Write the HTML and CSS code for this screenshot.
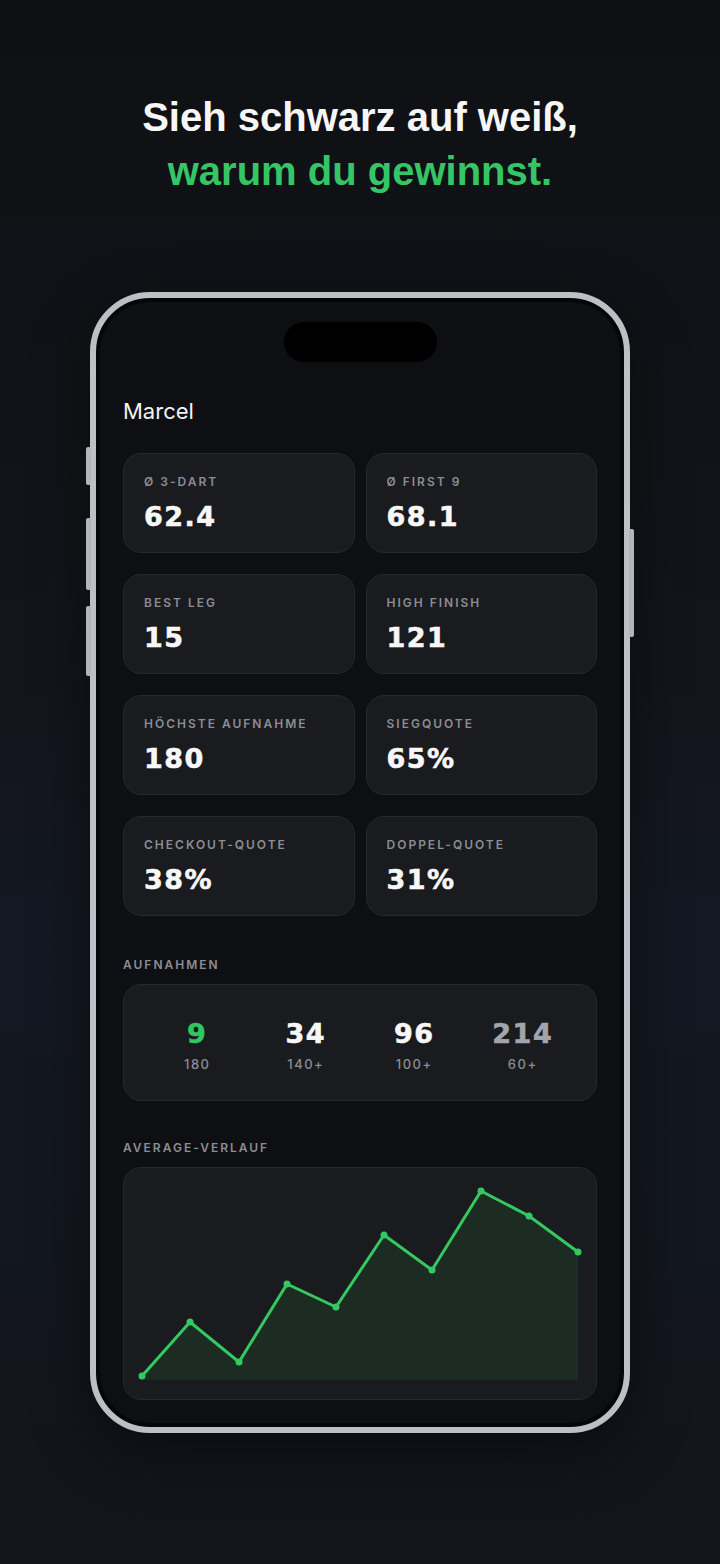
FILE: index.html
```html
<!DOCTYPE html>
<html lang="de">
<head>
    <meta charset="UTF-8">
    <meta name="viewport" content="width=device-width, initial-scale=1.0">
    <title>Statistiken</title>
    <link rel="stylesheet" href="styles.css">
</head>
<body>
<header class="hero">
    <h1>Sieh schwarz auf weiß,<br><span class="accent">warum du gewinnst.</span></h1>
</header>

<div class="phone">
    <span class="side-btn btn-action"></span>
    <span class="side-btn btn-vol-up"></span>
    <span class="side-btn btn-vol-down"></span>
    <span class="side-btn btn-power"></span>

    <div class="screen">
        <div class="island"></div>

        <div class="player-name">Marcel</div>

        <div class="stats-grid">
            <div class="stat-card">
                <div class="label">Ø 3-Dart</div>
                <div class="value">62.4</div>
            </div>
            <div class="stat-card">
                <div class="label">Ø First 9</div>
                <div class="value">68.1</div>
            </div>
            <div class="stat-card">
                <div class="label">Best Leg</div>
                <div class="value">15</div>
            </div>
            <div class="stat-card">
                <div class="label">High Finish</div>
                <div class="value">121</div>
            </div>
            <div class="stat-card">
                <div class="label">Höchste Aufnahme</div>
                <div class="value">180</div>
            </div>
            <div class="stat-card">
                <div class="label">Siegquote</div>
                <div class="value">65%</div>
            </div>
            <div class="stat-card">
                <div class="label">Checkout-Quote</div>
                <div class="value">38%</div>
            </div>
            <div class="stat-card">
                <div class="label">Doppel-Quote</div>
                <div class="value">31%</div>
            </div>
        </div>

        <div class="section-title">Aufnahmen</div>
        <div class="scores-card">
            <div class="score">
                <div class="value green">9</div>
                <div class="sub">180</div>
            </div>
            <div class="score">
                <div class="value">34</div>
                <div class="sub">140+</div>
            </div>
            <div class="score">
                <div class="value">96</div>
                <div class="sub">100+</div>
            </div>
            <div class="score">
                <div class="value muted">214</div>
                <div class="sub">60+</div>
            </div>
        </div>

        <div class="section-title chart-title">Average-Verlauf</div>
        <div class="chart-card">
            <!-- Verlauf der letzten 10 Spiele -->
            <svg viewBox="0 0 472 231" width="472" height="231">
                <polygon class="chart-area"
                         points="18,212 18,208 66,154 115,194 163,116 212,139 260,67 308,102 357,23 405,48 454,84 454,212"/>
                <polyline class="chart-line"
                          points="18,208 66,154 115,194 163,116 212,139 260,67 308,102 357,23 405,48 454,84"/>
                <g class="chart-dots">
                    <circle cx="18" cy="208" r="3.5"/>
                    <circle cx="66" cy="154" r="3.5"/>
                    <circle cx="115" cy="194" r="3.5"/>
                    <circle cx="163" cy="116" r="3.5"/>
                    <circle cx="212" cy="139" r="3.5"/>
                    <circle cx="260" cy="67" r="3.5"/>
                    <circle cx="308" cy="102" r="3.5"/>
                    <circle cx="357" cy="23" r="3.5"/>
                    <circle cx="405" cy="48" r="3.5"/>
                    <circle cx="454" cy="84" r="3.5"/>
                </g>
            </svg>
        </div>
    </div>
</div>
</body>
</html>
```

FILE: styles.css
```css
* {
    box-sizing: border-box;
}
html, body {
    margin: 0;
    padding: 0;
}
body {
    width: 720px;
    min-height: 1564px;
    font-family: Inter, "Noto Sans", sans-serif;
    background: linear-gradient(180deg, #0f1014 0%, #121419 35%, #141822 60%, #12151b 100%);
    color: #fff;
}

.hero {
    padding-top: 90px;
    text-align: center;
}
.hero h1 {
    margin: 0;
    font-family: "Liberation Sans", Arial, sans-serif;
    font-size: 40px;
    font-weight: 700;
    line-height: 54px;
    color: #f6f6f6;
}
.hero .accent {
    color: #36c566;
}

/* Telefonrahmen */
.phone {
    position: relative;
    width: 540px;
    height: 1141px;
    margin: 94px auto 0;
    padding: 4px;
    border: 6px solid #bdbfc4;
    border-radius: 60px;
    background: #050608;
    box-shadow: 0 20px 60px rgba(0, 0, 0, 0.45);
}
.side-btn {
    position: absolute;
    width: 5px;
    background: #b3b5ba;
    border-radius: 2px;
}
.btn-action {
    left: -10px;
    top: 149px;
    height: 38px;
}
.btn-vol-up {
    left: -10px;
    top: 220px;
    height: 72px;
}
.btn-vol-down {
    left: -10px;
    top: 308px;
    height: 70px;
}
.btn-power {
    right: -10px;
    top: 231px;
    height: 108px;
}

.screen {
    height: 100%;
    padding: 0 23px;
    border-radius: 50px;
    background: #0e0f13;
    overflow: hidden;
}
.island {
    width: 153px;
    height: 40px;
    margin: 20px auto 0;
    border-radius: 20px;
    background: #000;
}
.player-name {
    margin-top: 35px;
    font-size: 22px;
    line-height: 28px;
    font-weight: 400;
    color: #f2f2f2;
}

.stats-grid {
    display: grid;
    grid-template-columns: 1fr 1fr;
    column-gap: 11px;
    row-gap: 21px;
    margin-top: 28px;
}
.stat-card {
    height: 100px;
    padding: 21px 20px 0;
    background: #1a1b1e;
    border: 1px solid #27282c;
    border-radius: 18px;
}
.label, .section-title {
    font-size: 12px;
    line-height: 14px;
    font-weight: 600;
    letter-spacing: 2px;
    text-transform: uppercase;
    color: #8b8d93;
}
.value {
    margin-top: 11px;
    font-family: "DejaVu Sans", sans-serif;
    font-size: 27px;
    line-height: 34px;
    font-weight: 700;
    letter-spacing: 1.5px;
    color: #f7f7f7;
    -webkit-text-stroke: 0.6px currentColor;
}

.section-title {
    margin-top: 42px;
}
.scores-card {
    display: grid;
    grid-template-columns: repeat(4, 1fr);
    height: 117px;
    margin-top: 12px;
    padding: 32px 19px 0;
    background: #1a1b1e;
    border: 1px solid #27282c;
    border-radius: 18px;
}
.score {
    text-align: center;
}
.score .value {
    margin-top: 0;
}
.score .green {
    color: #33c561;
}
.score .muted {
    color: #a3a5ac;
}
.score .sub {
    margin-top: 5px;
    font-size: 13px;
    line-height: 16px;
    font-weight: 500;
    letter-spacing: 1.5px;
    color: #8b8d93;
}

.chart-title {
    margin-top: 40px;
}
.chart-card {
    height: 233px;
    margin-top: 12px;
    background: #1a1b1e;
    border: 1px solid #27282c;
    border-radius: 18px;
    overflow: hidden;
}
.chart-card svg {
    display: block;
}
.chart-area {
    fill: #34c759;
    fill-opacity: 0.1;
}
.chart-line {
    fill: none;
    stroke: #35c862;
    stroke-width: 3;
    stroke-linejoin: round;
    stroke-linecap: round;
}
.chart-dots circle {
    fill: #35c862;
}
```
